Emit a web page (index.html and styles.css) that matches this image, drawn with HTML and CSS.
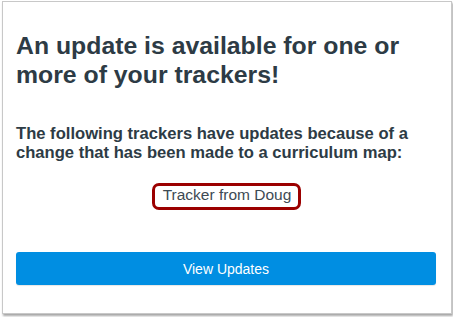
FILE: index.html
```html
<!DOCTYPE html>
<html>
<head>
<meta charset="utf-8">
<link rel="stylesheet" href="styles.css">
</head>
<body>
<div class="frame">
  <div class="content">
    <h1 class="title">An update is available for one or more of your trackers!</h1>
    <p class="lead">The following trackers have updates because of a change that has been made to a curriculum map:</p>
    <div class="list">
      <span class="tracker">Tracker from Doug</span>
    </div>
    <button class="btn">View Updates</button>
  </div>
</div>
</body>
</html>
```
FILE: styles.css
```css
html, body {
  margin: 0;
  padding: 0;
  background: #ffffff;
}
body {
  font-family: "Liberation Sans", Arial, sans-serif;
  color: #2d3b45;
  width: 453px;
  height: 317px;
  overflow: hidden;
}
.frame {
  margin: 1px 0 0 2px;
  width: 450px;
  height: 313px;
  box-sizing: border-box;
  border: 1px solid #c8c8c8;
  box-shadow: 1px 2px 2px rgba(0,0,0,0.35);
  background: #fff;
}
.content {
  padding: 30px 14px 0 13px;
  display: flex;
  flex-direction: column;
}
.title {
  margin: 0;
  font-size: 24.8px;
  line-height: 28.5px;
  font-weight: bold;
  color: #2d3b45;
}
.lead {
  margin: 34.6px 0 0 0;
  font-size: 16.6px;
  line-height: 19px;
  font-weight: bold;
  color: #2d3b45;
}
.list {
  margin-top: 21.5px;
  display: flex;
  justify-content: center;
}
.tracker {
  font-size: 15.5px;
  line-height: 18px;
  padding: 0 7px 3px 8px;
  border: 3px solid #9b0000;
  border-radius: 7px;
  color: #3d4a54;
}
.btn {
  margin-top: 42px;
  height: 33px;
  width: 420px;
  border: none;
  border-radius: 3px;
  background: #008ee2;
  color: #ffffff;
  font-family: "Liberation Sans", Arial, sans-serif;
  font-size: 14px;
  box-shadow: 0 1px 1px rgba(0,0,0,0.1);
}
```
